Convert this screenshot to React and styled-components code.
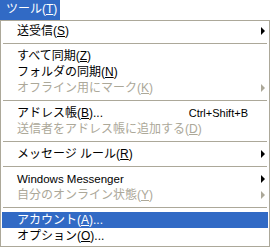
import React from 'react'
import styled, { createGlobalStyle } from 'styled-components';

const GlobalStyle = createGlobalStyle`
  body {
    margin: 0;
    background: #ffffff;
    font-family: "Liberation Sans", "Noto Sans CJK JP", sans-serif;
    font-size: 12px;
  }
`

const items = [
  { label: '送受信', key: 'S', sub: true },
  { sep: true },
  { label: 'すべて同期', key: 'Z' },
  { label: 'フォルダの同期', key: 'N' },
  { label: 'オフライン用にマーク', key: 'K', disabled: true, sub: true },
  { sep: true },
  { label: 'アドレス帳', key: 'B', dots: true, shortcut: 'Ctrl+Shift+B' },
  { label: '送信者をアドレス帳に追加する', key: 'D', disabled: true },
  { sep: true },
  { label: 'メッセージ ルール', key: 'R', sub: true },
  { sep: true },
  { label: 'Windows Messenger', sub: true, latin: true },
  { label: '自分のオンライン状態', key: 'Y', disabled: true, sub: true },
  { sep: true },
  { label: 'アカウント', key: 'A', dots: true, active: true },
  { label: 'オプション', key: 'O', dots: true },
];

function ToolsMenu() {
  return (
    <>
      <GlobalStyle />
      <Page>
        <MenuBar>
          <Title>ツール(<u>T</u>)</Title>
        </MenuBar>
        <Menu>
          {items.map((it, i) =>
            it.sep ? (
              <Separator key={i} />
            ) : (
              <Item key={i} $active={it.active} $disabled={it.disabled}>
                <Label $latin={it.latin}>
                  {it.label}
                  {it.key && <>(<u>{it.key}</u>)</>}
                  {it.dots && '...'}
                </Label>
                {it.shortcut && <Shortcut>{it.shortcut}</Shortcut>}
                {it.sub && <Arrow $disabled={it.disabled} />}
              </Item>
            )
          )}
        </Menu>
      </Page>
    </>
  )
}

// Styled Components
// ====================================================
const Page = styled.div`
  width: 271px;
  height: 247px;
  overflow: hidden;
`
const MenuBar = styled.div`
  display: flex;
  height: 20px;
`
const Title = styled.div`
  width: 60px;
  height: 20px;
  box-sizing: border-box;
  padding-left: 6px;
  background: #316ac5;
  color: #ffffff;
  line-height: 19px;
  white-space: nowrap;
`
const Menu = styled.div`
  width: 270px;
  box-sizing: border-box;
  border: 1px solid #aca899;
  padding: 2px 1px;
  background: #ffffff;
`
const Item = styled.div`
  position: relative;
  display: flex;
  align-items: center;
  height: 16px;
  padding-left: 15px;
  padding-right: 20px;
  background: ${p => (p.$active ? '#316ac5' : 'transparent')};
  color: ${p => (p.$active ? '#ffffff' : p.$disabled ? '#aca899' : '#000000')};
  white-space: nowrap;
  line-height: 16px;
`
const Label = styled.span`
  flex: 1;
  font-size: ${p => (p.$latin ? '11.5px' : '12px')};
  u { text-underline-offset: 1px; }
`
const Shortcut = styled.span`
  font-size: 11px;
`
const Arrow = styled.span`
  position: absolute;
  right: 3px;
  top: 4px;
  width: 0;
  height: 0;
  border-top: 4px solid transparent;
  border-bottom: 4px solid transparent;
  border-left: 4px solid ${p => (p.$disabled ? '#aca899' : '#000000')};
`
const Separator = styled.div`
  height: 9px;
  display: flex;
  align-items: center;
  padding: 0 1px;

  &::after {
    content: "";
    flex: 1;
    height: 1px;
    background: #aca899;
  }
`
// ====================================================

export default ToolsMenu
